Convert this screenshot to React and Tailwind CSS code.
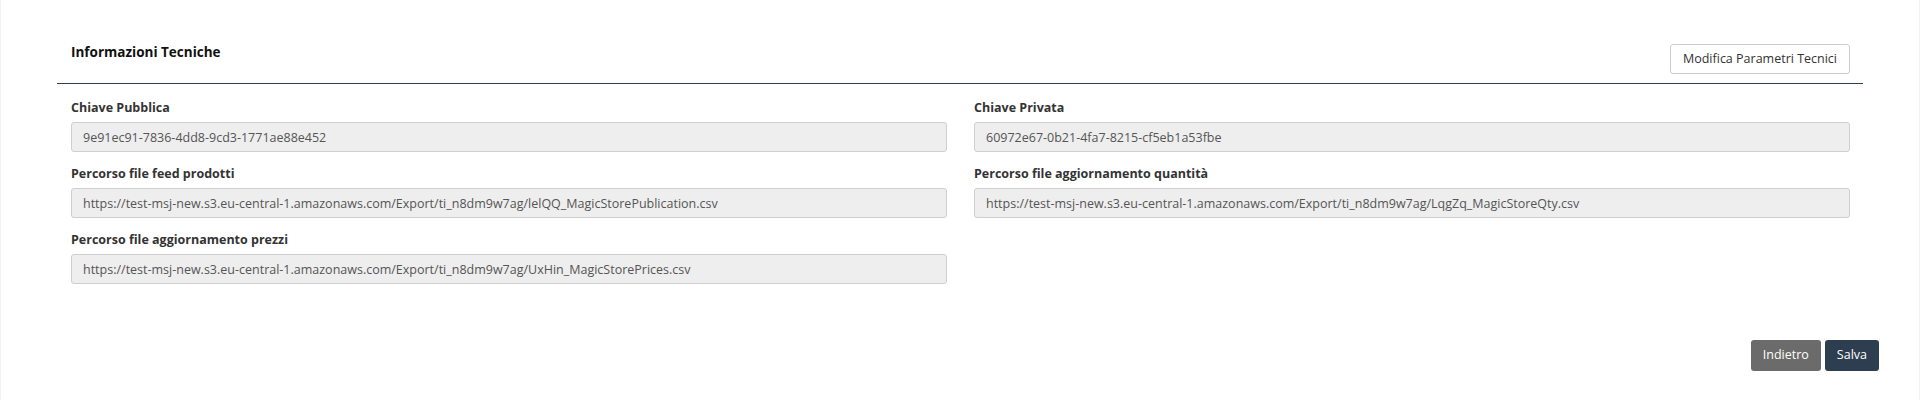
const fields = [
  { label: 'Chiave Pubblica', value: '9e91ec91-7836-4dd8-9cd3-1771ae88e452' },
  { label: 'Chiave Privata', value: '60972e67-0b21-4fa7-8215-cf5eb1a53fbe' },
  { label: 'Percorso file feed prodotti', value: 'https://test-msj-new.s3.eu-central-1.amazonaws.com/Export/ti_n8dm9w7ag/lelQQ_MagicStorePublication.csv' },
  { label: 'Percorso file aggiornamento quantità', value: 'https://test-msj-new.s3.eu-central-1.amazonaws.com/Export/ti_n8dm9w7ag/LqgZq_MagicStoreQty.csv' },
  { label: 'Percorso file aggiornamento prezzi', value: 'https://test-msj-new.s3.eu-central-1.amazonaws.com/Export/ti_n8dm9w7ag/UxHin_MagicStorePrices.csv' },
]

function Field({ label, value }) {
  return (
    <div className="flex flex-col">
      <label className="h-[18px] text-[12.5px] leading-[18px] font-bold text-[#333]">{label}</label>
      <input
        readOnly
        value={value}
        className="mt-[5px] h-[30px] w-full rounded-[3px] border border-[#cfcfcf] bg-[#eeeeee] px-[11px] text-[12.5px] text-[#555] outline-none"
      />
    </div>
  )
}

export default function App() {
  return (
    <div className="h-[400px] w-full border-x border-[#f2f2f2] bg-white font-['Open_Sans',sans-serif]">
      <div className="px-[56px]">
        <div className="flex items-start justify-between pl-[14px] pr-[13px] pt-[42px]">
          <h3 className="h-5 text-[13.5px] leading-5 font-bold text-[#111]">Informazioni Tecniche</h3>
          <button className="mt-[2px] h-[30px] rounded-[3px] border border-[#ccc] bg-white px-3 text-[12.5px] text-[#333]">
            Modifica Parametri Tecnici
          </button>
        </div>
        <div className="mt-[9px] h-px bg-[#2c3e50]" />
        <div className="grid grid-cols-2 gap-x-[27px] gap-y-[13px] pl-[14px] pr-[13px] pt-[15px]">
          {fields.map(f => (
            <Field key={f.label} {...f} />
          ))}
        </div>
      </div>
      <div className="mt-[56px] flex justify-end gap-1 pr-[40px]">
        <button className="h-[31px] rounded-[3px] bg-[#6b6b6b] px-3 text-[12.5px] text-white">Indietro</button>
        <button className="h-[31px] rounded-[3px] bg-[#2c3e50] px-3 text-[12.5px] text-white">Salva</button>
      </div>
    </div>
  )
}
